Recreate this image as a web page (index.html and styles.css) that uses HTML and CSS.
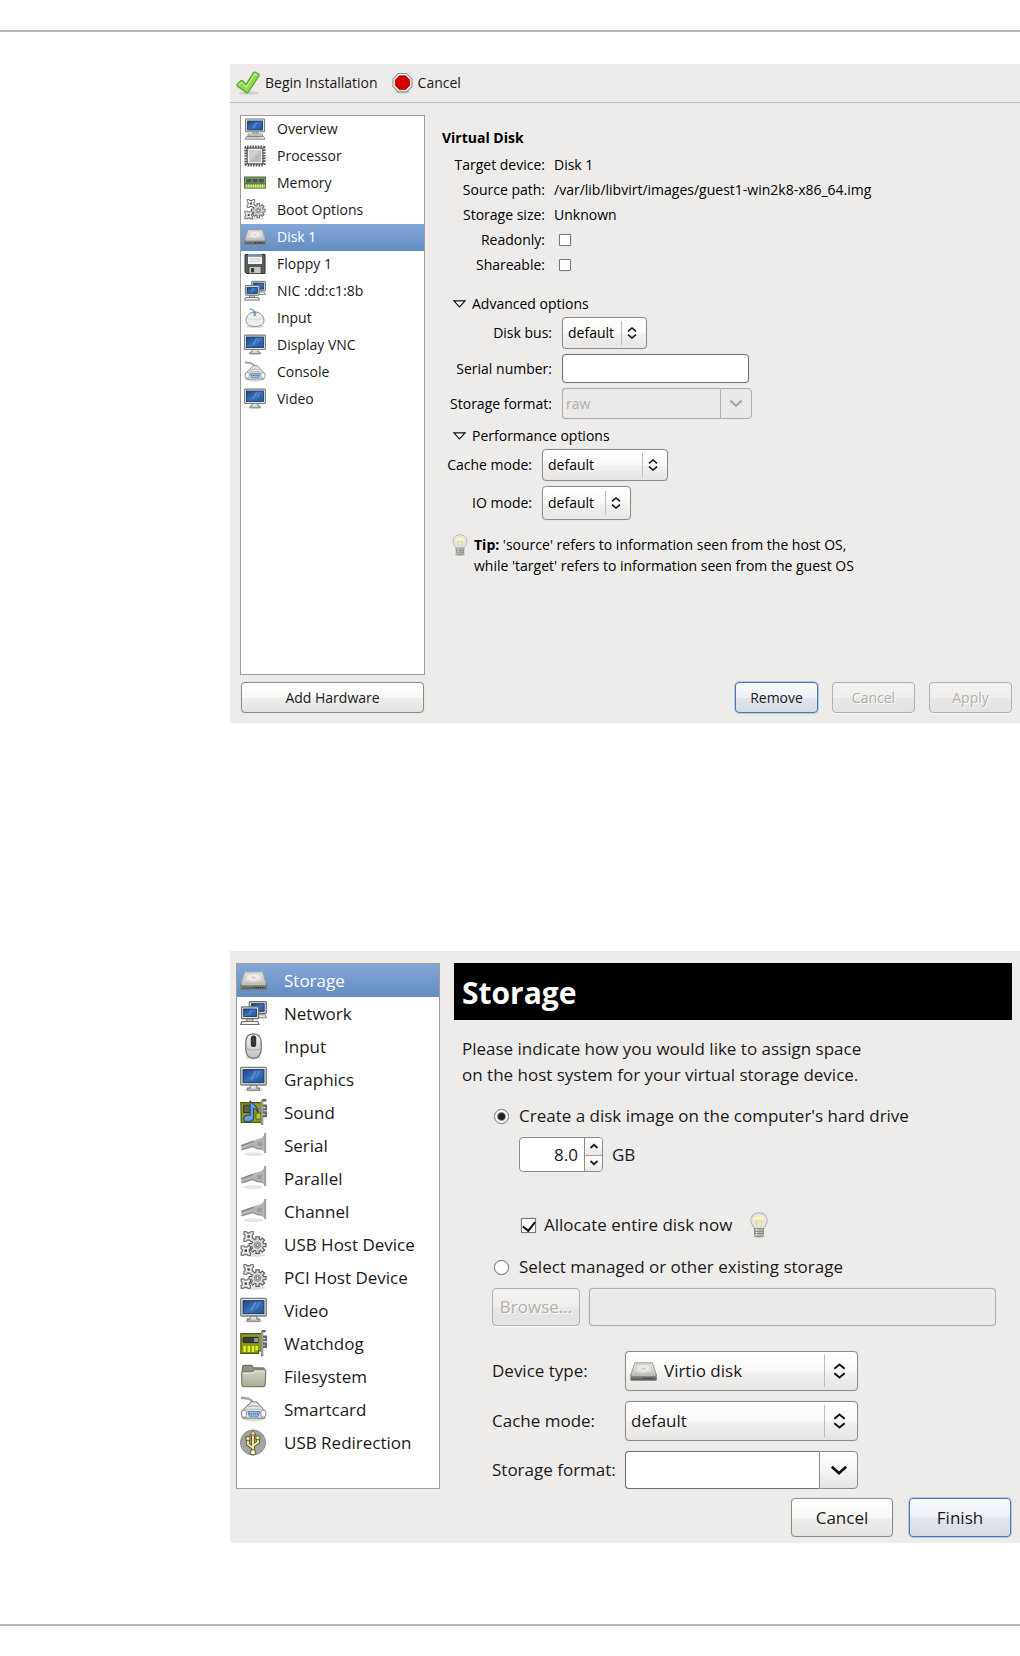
FILE: index.html
```html
<!DOCTYPE html>
<html lang="en">
<head>
<meta charset="utf-8">
<title>Virtual machine storage</title>
<link rel="stylesheet" href="styles.css">
</head>
<body>
<svg class="sprite" width="0" height="0" aria-hidden="true">
  <defs>
    <linearGradient id="g-screen" x1="0" y1="0" x2="1" y2="1"><stop offset="0" stop-color="#1c4587"/><stop offset=".5" stop-color="#3a70ba"/><stop offset="1" stop-color="#245299"/></linearGradient>
    <linearGradient id="g-metal" x1="0" y1="0" x2="0" y2="1"><stop offset="0" stop-color="#f6f6f5"/><stop offset="1" stop-color="#bfc1bd"/></linearGradient>
    <linearGradient id="g-dark" x1="0" y1="0" x2="0" y2="1"><stop offset="0" stop-color="#a5a7a3"/><stop offset="1" stop-color="#4e504c"/></linearGradient>
    <linearGradient id="g-folder" x1="0" y1="0" x2="0" y2="1"><stop offset="0" stop-color="#d2d5c4"/><stop offset="1" stop-color="#a9ad98"/></linearGradient>

    <symbol id="monitor" viewBox="0 0 22 22">
      <ellipse cx="11" cy="19.5" rx="8" ry="1.5" fill="#000" opacity=".1"/>
      <path d="M8.5 15.5h5l.5 2.500h2v1.800H6V18h2z" fill="url(#g-metal)" stroke="#777974" stroke-width=".9"/>
      <rect x=".6" y="1.100" width="20.800" height="14.400" rx=".8" fill="#e4e5e1" stroke="#7c7e79" stroke-width="1.100"/>
      <rect x="2.500" y="3" width="17" height="10.600" fill="url(#g-screen)" stroke="#17366b" stroke-width=".8"/>
      <path d="M8 11 12 4h1.800l-3.500 7zM12.500 9.500 15.200 4h1.200l-2.700 5.500z" fill="#7fa5dc" opacity=".5"/>
    </symbol>
    <symbol id="computer" viewBox="0 0 22 22">
      <path d="M9 13.500h5v3H9z" fill="#c4c6c2" stroke="#777974" stroke-width=".8"/>
      <rect x="1.600" y="1" width="19" height="12.800" rx=".8" fill="#e4e5e1" stroke="#7c7e79" stroke-width="1.100"/>
      <rect x="3.600" y="3" width="15" height="9" fill="url(#g-screen)" stroke="#17366b" stroke-width=".8"/>
      <path d="M8.500 10 12 4h1.500l-3 6z" fill="#7fa5dc" opacity=".5"/>
      <path d="M4 16h14.500v2H4z" fill="#e4e5e1" stroke="#8a8c87" stroke-width=".8"/>
      <path d="M2.500 18.500h17l1.500 2.700H1z" fill="#f3f3f1" stroke="#7c7e79" stroke-width=".9"/>
      <path d="M3.500 19.800h13" stroke="#8a8c87" stroke-width=".8" stroke-dasharray="1.400 .6"/>
    </symbol>
    <symbol id="network" viewBox="0 0 22 22">
      <path d="M12 12h8.500l1 2.500H12z" fill="#f1f1ef" stroke="#777974" stroke-width=".8"/>
      <rect x="7.600" y="1.300" width="13.800" height="9.600" rx=".6" fill="#e4e5e1" stroke="#6c6e69"/>
      <rect x="9.300" y="3" width="10.400" height="6.200" fill="url(#g-screen)" stroke="#17366b" stroke-width=".7"/>
      <path d="M5.500 15h5v3h-5z" fill="#c4c6c2" stroke="#6c6e69" stroke-width=".8"/>
      <rect x="1.300" y="5.600" width="13.800" height="9.600" rx=".6" fill="#e4e5e1" stroke="#6c6e69"/>
      <rect x="3" y="7.300" width="10.400" height="6.200" fill="url(#g-screen)" stroke="#17366b" stroke-width=".7"/>
      <path d="m7 12 2-4h1l-2 4z" fill="#7fa5dc" opacity=".6"/>
      <path d="M1.500 17.500h13l1 2.500H.6z" fill="#f1f1ef" stroke="#6c6e69" stroke-width=".9"/>
    </symbol>
    <symbol id="cpu" viewBox="0 0 22 22">
      <rect x="2" y="2" width="18" height="18" rx="1" fill="none" stroke="#50524e" stroke-width="3.200" stroke-dasharray="1.600 1.100"/>
      <rect x="3.200" y="3.200" width="15.600" height="15.600" rx="1" fill="#f5f5f4" stroke="#5d5f5a" stroke-width="1.200"/>
      <rect x="5" y="5" width="12" height="12" fill="#cfd0ce"/>
      <path d="M5 17 17 5v12z" fill="#bcbeba"/>
    </symbol>
    <symbol id="memory" viewBox="0 0 22 22">
      <rect x=".5" y="5" width="21" height="7" fill="#75a873" stroke="#46703f"/>
      <path d="M2.200 6.800h5.300v3.600H2.200zM8.400 6.800h5.300v3.600H8.400zM14.600 6.800h5.300v3.600h-5.300z" fill="#4f514e"/>
      <path d="M.5 12h21v4.200H.5z" fill="#78a63c" stroke="#456d1f" stroke-width=".8"/>
      <path d="M1.800 14.100h19" stroke="#f6ef8e" stroke-width="3" stroke-dasharray="1.500 .8"/>
    </symbol>
    <symbol id="gears" viewBox="0 0 22 22">
      <ellipse cx="12" cy="19.500" rx="9" ry="1.500" fill="#000" opacity=".12"/>
      <g fill="#555753">
        <g id="gear-big" transform="translate(14.300 11.500)">
          <circle r="5.300"/>
          <path id="teeth" d="M-1.800-7.300h3.600v14.600h-3.600zM-7.300-1.800h14.600v3.600H-7.300z"/>
          <path d="M-1.800-7.300h3.600v14.600h-3.600zM-7.300-1.800h14.600v3.600H-7.300z" transform="rotate(45)"/>
        </g>
        <path d="M2.800.3h3v.8h2.400V.3h3v3h-.8v2.400h.8v3h-3v-.8H5.800v.8h-3v-3h.8V3.300h-.8z"/>
        <path d="M.5 11.800h3v.8h2.400v-.8h3v3h-.8v2.400h.8v3h-3v-.8H3.500v.8h-3v-3h.8v-2.400H.5z"/>
      </g>
      <g fill="#d6d8d4">
        <g transform="translate(14.300 11.500)">
          <circle r="4.500"/>
          <path d="M-.9-6.400H.9V6.400H-.9zM-6.400-.9H6.400V.9H-6.400z"/>
          <path d="M-.9-6.400H.9V6.400H-.9zM-6.400-.9H6.400V.9H-6.400z" transform="rotate(45)"/>
        </g>
      </g>
      <g fill="#f1f1ef">
        <path d="M3.600 1.100h1.800v.9h3.200v-.9h1.800v1.800h-.9v3.200h.9v1.800H8.600V7H5.400v.9H3.600V6.100h.9V2.900h-.9z"/>
        <path d="M1.300 12.600h1.800v.9h3.200v-.9h1.800v1.800h-.9v3.200h.9v1.800H6.300v-.9H3.100v.9H1.300v-1.800h.9v-3.200h-.9z"/>
      </g>
      <circle cx="14.300" cy="11.500" r="2.600" fill="#bdbfbb" stroke="#81837e" stroke-width=".7"/>
      <circle cx="14.300" cy="11.500" r="1.200" fill="#fff" stroke="#555753" stroke-width=".7"/>
      <rect x="6" y="3.500" width="2" height="2" fill="#4a4c48"/><rect x="3.700" y="15" width="2" height="2" fill="#4a4c48"/>
    </symbol>
    <symbol id="disk" viewBox="0 0 22 22">
      <path d="M4 4h14.300l3 9.500H.8z" fill="url(#g-metal)" stroke="#a2a4a0" stroke-width=".9"/>
      <path d="M5.500 5h11.300l1.700 6.500q-7.500 2-15 0z" fill="#dddedc" stroke="#c1c2bf" stroke-width=".6"/>
      <ellipse cx="11" cy="8.300" rx="5" ry="2.600" fill="#ebebea"/>
      <ellipse cx="11" cy="8.600" rx="1.800" ry=".7" fill="#c9cac7"/>
      <path d="M.7 13.500h20.700v4.600H.7z" fill="url(#g-dark)" stroke="#777975" stroke-width=".8"/>
      <path d="M1.200 13.800h19.600" stroke="#deded9"/>
      <path d="M11 16.600h8.500" stroke="#333" stroke-width="1.200" stroke-dasharray="1 .7"/>
    </symbol>
    <symbol id="floppy" viewBox="0 0 22 22">
      <path d="M1 1.500h20v19H2.500L1 19z" fill="#5b5d5a" stroke="#2f312e"/>
      <path d="M4 1.500h14v9.500H4z" fill="#f4f4f3"/>
      <path d="M4 1.500h14v2.300H4z" fill="#5f8fc7"/>
      <path d="M5.500 6h11M5.500 8.300h11" stroke="#c2c4c0" stroke-width=".9"/>
      <path d="M5 13.500h12v7H5z" fill="#c6c8c4" stroke="#3c3e3b" stroke-width=".7"/>
      <path d="M7 15h3.200v4.300H7z" fill="#3c3e3b"/>
    </symbol>
    <symbol id="mouse" viewBox="0 0 22 22">
      <ellipse cx="11" cy="19.500" rx="9" ry="1.700" fill="#000" opacity=".12"/>
      <path d="M5 1.500c1 2 5-.5 5.500 4" fill="none" stroke="#888a85" stroke-width="1.100"/>
      <path d="M11 5c6 0 9 4.500 9 8.500 0 4-3.500 6-9 6s-9-2-9-6C2 9.500 5 5 11 5z" fill="#eeeeec" stroke="#8e908b"/>
      <path d="M3 10.500c4 3 12 3 16 0" fill="none" stroke="#d8dad6"/>
      <path d="M9.500 5h2.600l-.8 4h-1z" fill="#7dabe0" stroke="#5685bd" stroke-width=".6"/>
    </symbol>
    <symbol id="mouse-dark" viewBox="0 0 22 22">
      <ellipse cx="11" cy="20" rx="6.500" ry="1.400" fill="#000" opacity=".15"/>
      <path d="M11 .8c4.500 0 6 2 6.200 6.200.3 6 .8 13.500-6.200 13.500S4.500 13 4.800 7C5 2.800 6.500.8 11 .8z" fill="url(#g-metal)" stroke="#6d6f6a"/>
      <path d="M5 12c1 2.500 11 2.500 12 0" fill="none" stroke="#a9aba7" stroke-width=".8"/>
      <rect x="8.800" y="2" width="4.400" height="9.500" rx="2.200" fill="#2e3032"/>
      <path d="M11 4.500v2.500" stroke="#8a4a44" stroke-width="1.200"/>
    </symbol>
    <symbol id="port" viewBox="0 0 22 22">
      <ellipse cx="11" cy="18.500" rx="9" ry="2.200" fill="#000" opacity=".15"/>
      <path d="M.8 1.500c5 .3 8.500.5 10.500 4.500" fill="none" stroke="#a5a7a3" stroke-width="2"/>
      <path d="m7.500 6.500 1.500-1.800h4.500L15 6.500l5.500 6-.5 5.500H2L1.200 12.500z" fill="#e6e7e4" stroke="#888a85" stroke-width=".9"/>
      <path d="M6.500 9c2-1.300 7-1.300 9 0M5 10.800h12" fill="none" stroke="#b1b3af"/>
      <rect x="1.300" y="11.700" width="4" height="5.500" rx="1.500" fill="#fafafa" stroke="#888a85" stroke-width=".8"/>
      <rect x="17" y="11.700" width="4" height="5.500" rx="1.500" fill="#fafafa" stroke="#888a85" stroke-width=".8"/>
      <path d="M6.500 12.600h9.500l-1 3.900H7.500z" fill="#9dbce6" stroke="#5b86bf" stroke-width=".8"/>
      <path d="M7.500 14.500h7.500" stroke="#3465a4" stroke-dasharray=".9 .7"/>
    </symbol>
    <symbol id="sound" viewBox="0 0 22 22">
      <path d="M.7 3h17.500v16H1z" fill="#8c9c19" stroke="#4e5a0c"/>
      <rect x="3" y="5" width="6" height="6" fill="#5d5f5a" stroke="#33352f" stroke-width=".8"/>
      <path d="M13 11.500h4v5h-4z" fill="#b8c441" stroke="#4e5a0c" stroke-width=".7"/>
      <path d="M18 1h3.500M18 1v20M18 5.500h3.500v3H18M18 11h3v3h-3" fill="none" stroke="#666863" stroke-width="1.900"/>
      <path d="M18 1.500v19" stroke="#dcdeda" stroke-width=".7"/>
      <path d="M8.300 1.300c.7 2.700 6.900 3.700 6.400 9.700-1-2.500-2.200-3.300-3.700-3.300v7.800c0 3.300-8 4.300-8 .7 0-2.700 3.300-3.500 5.300-2.900z" fill="#6f9cd6" stroke="#204a87" stroke-width=".9"/>
    </symbol>
    <symbol id="card" viewBox="0 0 22 22">
      <path d="M.7 3h17v14H15v2H.7z" fill="#8c9c19" stroke="#4e5a0c"/>
      <rect x="2.500" y="6" width="12.500" height="4.300" rx=".6" fill="#3b3d3a" stroke="#222" stroke-width=".7"/>
      <path d="M11.500 6.500H15v3.300h-3.500z" fill="#6f9cd6"/>
      <path d="M3.800 18v-5M7.200 18v-5M10.600 18v-5M13.600 16.500V13" stroke="#e9f02b" stroke-width="1.900"/>
      <path d="M18 .8h3M18 .8v20.500M18 5.500h3.500v2.700H18M18 11h3v2.700h-3" fill="none" stroke="#666863" stroke-width="1.900"/>
      <path d="M18 1.500v19" stroke="#dcdeda" stroke-width=".7"/>
    </symbol>
    <symbol id="plug" viewBox="0 0 22 22">
      <ellipse cx="11" cy="18" rx="8" ry="1.600" fill="#000" opacity=".1"/>
      <path d="M1 10.800 9.500 7.500 13 6.200c4-.5 6.500-2 7.300-5.500h.7v16.500h-.7c-1-2.500-3-3-6-3.200L10.500 12.200 1.500 15z" fill="#b4b6b1"/>
      <path d="m1 11.300 10-3.800" stroke="#888a85" stroke-width="1.300"/>
      <path d="M1.200 14.300 10.500 11.700 14 13.500l4 .2" fill="none" stroke="#8e908b"/>
      <path d="M20.500.8v16.400" stroke="#9da09a" stroke-width="1.600"/>
      <path d="m14 8.500 4-.8v4l-4-.4z" fill="#999b97"/>
    </symbol>
    <symbol id="folder" viewBox="0 0 22 22">
      <path d="M2 3.500Q2 2 3.500 2h6L11 4h7.500Q20 4 20 5.500V10H2z" fill="#8f937f" stroke="#6c705e"/>
      <path d="M1.200 8.200Q1.200 7 2.500 7H10l1.500-1.500H20q1 0 1 1.300l-.5 11q-.1 1.500-1.500 1.500H3q-1.300 0-1.400-1.500z" fill="url(#g-folder)" stroke="#787c69"/>
      <path d="M2.500 8.200h8L12 6.700h7.700" fill="none" stroke="#e7e9dd" stroke-width=".8"/>
    </symbol>
    <symbol id="usb" viewBox="0 0 22 22">
      <circle cx="10.600" cy="11" r="10.200" fill="#a3a5a2" stroke="#868883" stroke-width=".8"/>
      <g stroke="#4a4330" stroke-width="2.900" fill="none"><path d="M10.600 19V4M10.600 15.500 6.500 12.500V8M10.600 13.500l4-2.500V7"/></g>
      <g stroke="#f6e58a" stroke-width="1.700" fill="none"><path d="M10.600 19V4M10.600 15.500 6.500 12.500V8M10.600 13.500l4-2.500V7"/></g>
      <path d="m10.600 1.200 2.400 3.600H8.200z" fill="#f6e58a" stroke="#4a4330" stroke-width=".6"/>
      <rect x="4.900" y="6.200" width="3.200" height="3" fill="#f6e58a" stroke="#4a4330" stroke-width=".6"/>
      <rect x="13" y="5.700" width="3.200" height="3" fill="#f6e58a" stroke="#4a4330" stroke-width=".6"/>
      <circle cx="10.600" cy="19" r="2.200" fill="#f5f0d8" stroke="#4a4330" stroke-width=".7"/>
    </symbol>
    <symbol id="bulb" viewBox="0 0 16 22">
      <ellipse cx="8" cy="20.500" rx="5" ry="1.200" fill="#000" opacity=".25"/>
      <path d="M8 .7c4.300 0 7 2.900 7 6.500 0 3.300-2.800 4.300-3 7.300H4c-.2-3-3-4-3-7.300C1 3.600 3.700.7 8 .7z" fill="#e6e7e3" stroke="#b4b7b0" stroke-width=".9"/>
      <ellipse cx="8" cy="6" rx="4" ry="2.600" fill="#fbf7b5" opacity=".9"/>
      <path d="m6.500 14-1-7 1.700 1L8 7l.8 1 1.700-1-1 7" fill="none" stroke="#d2cfa0" stroke-width=".7"/>
      <path d="M4.200 14h7.600v4.800L10.300 20.500H5.700L4.200 18.800z" fill="#babdb6" stroke="#8b8e88" stroke-width=".8"/>
      <path d="M6 14.500v5" stroke="#f2f2f0" stroke-width="1.200"/>
      <path d="M4.300 16.300h7.400M4.300 18.200h7.400" stroke="#7c7f79" stroke-width=".8"/>
    </symbol>
    <symbol id="check" viewBox="0 0 24 24">
      <ellipse cx="13" cy="22" rx="10" ry="1.700" fill="#000" opacity=".12"/>
      <path d="m1.300 13.200 3.400-3.400q1-.8 2 .2l3.300 3.500L17.300 1.900q.8-1.200 2-.7l3 1.500q1.300.8.600 2.200L12.500 21q-1.200 1.500-2.600.2l-8.400-6q-1.100-1-.2-2z" fill="#8fdc4a" stroke="#5ba32c" stroke-width="1.200" stroke-linejoin="round"/>
      <path d="m3 13.700 2.500-2.300 4.800 4.800L19 2.800l2 1" fill="none" stroke="#c9f39f" stroke-width="1.100"/>
    </symbol>
    <symbol id="stop" viewBox="0 0 22 22">
      <ellipse cx="11" cy="20.500" rx="8" ry="1.300" fill="#000" opacity=".18"/>
      <path d="M6.700 1h8.600L21 6.700v8L15.300 20.300H6.700L1 14.700v-8z" fill="#f0f0ee" stroke="#8f918d" stroke-width="1.100"/>
      <path d="M7.800 3.500h6.400l4.300 4.300v5.800l-4.300 4.300H7.800l-4.300-4.300V7.800z" fill="#d40000" stroke="#990000" stroke-width=".8"/>
    </symbol>
    <symbol id="updown" viewBox="0 0 12 14">
      <path d="m1.200 5 4.800-4 4.800 4M1.200 9 6 13l4.800-4" fill="none" stroke="#111" stroke-width="1.800"/>
    </symbol>
    <symbol id="down" viewBox="0 0 16 10">
      <path d="m1.500 1.500 6.500 6 6.500-6" fill="none" stroke="currentColor" stroke-width="2.500"/>
    </symbol>
    <symbol id="up-small" viewBox="0 0 10 6"><path d="m1.500 5L5 1.800 8.500 5" fill="none" stroke="#222" stroke-width="1.900"/></symbol>
    <symbol id="down-small" viewBox="0 0 10 6"><path d="m1.500 1L5 4.200 8.500 1" fill="none" stroke="#222" stroke-width="1.900"/></symbol>
    <symbol id="expander" viewBox="0 0 13 8"><path d="M.9.8h11.200L6.500 6.800z" fill="#fff" stroke="#111" stroke-width="1.200"/></symbol>
  </defs>
</svg>

<main class="page">
  <section class="window details-window" aria-label="Virtual machine details">
    <div class="toolbar">
      <button class="tool" type="button"><svg class="icon-tool"><use href="#check"/></svg>Begin Installation</button>
      <button class="tool" type="button"><svg class="icon-stop"><use href="#stop"/></svg>Cancel</button>
    </div>
    <div class="details-body">
      <ul class="list list-small">
        <li><svg class="icon"><use href="#computer"/></svg>Overview</li>
        <li><svg class="icon"><use href="#cpu"/></svg>Processor</li>
        <li><svg class="icon"><use href="#memory"/></svg>Memory</li>
        <li><svg class="icon"><use href="#gears"/></svg>Boot Options</li>
        <li class="selected"><svg class="icon"><use href="#disk"/></svg>Disk 1</li>
        <li><svg class="icon"><use href="#floppy"/></svg>Floppy 1</li>
        <li><svg class="icon"><use href="#network"/></svg>NIC :dd:c1:8b</li>
        <li><svg class="icon"><use href="#mouse"/></svg>Input</li>
        <li><svg class="icon"><use href="#monitor"/></svg>Display VNC</li>
        <li><svg class="icon"><use href="#port"/></svg>Console</li>
        <li><svg class="icon"><use href="#monitor"/></svg>Video</li>
      </ul>
      <div class="properties">
        <h2 class="properties-title">Virtual Disk</h2>
        <div class="facts">
          <span class="label">Target device:</span><span>Disk 1</span>
          <span class="label">Source path:</span><span>/var/lib/libvirt/images/guest1-win2k8-x86_64.img</span>
          <span class="label">Storage size:</span><span>Unknown</span>
          <label class="label" for="readonly">Readonly:</label><input class="tick tick-small" type="checkbox" id="readonly">
          <label class="label" for="shareable">Shareable:</label><input class="tick tick-small" type="checkbox" id="shareable">
        </div>
        <details class="advanced" open>
          <summary><svg class="expander"><use href="#expander"/></svg>Advanced options</summary>
          <div class="options options-advanced">
            <label class="label" for="bus">Disk bus:</label>
            <div class="select select-bus"><select id="bus"><option>default</option></select><svg class="arrows"><use href="#updown"/></svg></div>
            <label class="label" for="serial">Serial number:</label>
            <input class="entry entry-serial" type="text" id="serial">
            <label class="label" for="format1">Storage format:</label>
            <div class="combo combo-small"><input class="entry" type="text" id="format1" value="raw" disabled><button type="button" disabled aria-label="Choose format"><svg class="chevron"><use href="#down"/></svg></button></div>
          </div>
        </details>
        <details class="performance" open>
          <summary><svg class="expander"><use href="#expander"/></svg>Performance options</summary>
          <div class="options options-performance">
            <label class="label" for="cache1">Cache mode:</label>
            <div class="select select-cache"><select id="cache1"><option>default</option></select><svg class="arrows"><use href="#updown"/></svg></div>
            <label class="label" for="io">IO mode:</label>
            <div class="select select-io"><select id="io"><option>default</option></select><svg class="arrows"><use href="#updown"/></svg></div>
          </div>
        </details>
        <div class="tip">
          <svg class="bulb"><use href="#bulb"/></svg>
          <p><b>Tip:</b> 'source' refers to information seen from the host OS,<br>while 'target' refers to information seen from the guest OS</p>
        </div>
      </div>
      <button class="button add" type="button">Add Hardware</button>
      <div class="actions">
        <button class="button primary" type="button">Remove</button>
        <button class="button" type="button" disabled>Cancel</button>
        <button class="button" type="button" disabled>Apply</button>
      </div>
    </div>
  </section>

  <section class="window add-window" aria-label="Add new virtual hardware">
    <ul class="list list-large">
      <li class="selected"><svg class="icon"><use href="#disk"/></svg>Storage</li>
      <li><svg class="icon"><use href="#network"/></svg>Network</li>
      <li><svg class="icon"><use href="#mouse-dark"/></svg>Input</li>
      <li><svg class="icon"><use href="#monitor"/></svg>Graphics</li>
      <li><svg class="icon"><use href="#sound"/></svg>Sound</li>
      <li><svg class="icon"><use href="#plug"/></svg>Serial</li>
      <li><svg class="icon"><use href="#plug"/></svg>Parallel</li>
      <li><svg class="icon"><use href="#plug"/></svg>Channel</li>
      <li><svg class="icon"><use href="#gears"/></svg>USB Host Device</li>
      <li><svg class="icon"><use href="#gears"/></svg>PCI Host Device</li>
      <li><svg class="icon"><use href="#monitor"/></svg>Video</li>
      <li><svg class="icon"><use href="#card"/></svg>Watchdog</li>
      <li><svg class="icon"><use href="#folder"/></svg>Filesystem</li>
      <li><svg class="icon"><use href="#port"/></svg>Smartcard</li>
      <li><svg class="icon"><use href="#usb"/></svg>USB Redirection</li>
    </ul>
    <form class="storage">
      <h1 class="banner">Storage</h1>
      <p class="intro">Please indicate how you would like to assign space<br>on the host system for your virtual storage device.</p>
      <label class="choice create"><input class="dot" type="radio" name="source" checked>Create a disk image on the computer's hard drive</label>
      <div class="size">
        <div class="spin">
          <input type="number" id="size" value="8.0" step="0.1" aria-label="Size in gigabytes">
          <div class="spin-buttons">
            <button type="button" aria-label="Increase"><svg><use href="#up-small"/></svg></button>
            <button type="button" aria-label="Decrease"><svg><use href="#down-small"/></svg></button>
          </div>
        </div>
        <label for="size">GB</label>
      </div>
      <div class="allocate">
        <label class="choice"><input class="tick" type="checkbox" checked>Allocate entire disk now</label>
        <svg class="bulb bulb-large"><use href="#bulb"/></svg>
      </div>
      <label class="choice managed"><input class="dot" type="radio" name="source">Select managed or other existing storage</label>
      <div class="browse">
        <button class="button" type="button" disabled>Browse...</button>
        <input class="entry" type="text" aria-label="Storage path" disabled>
      </div>
      <div class="device">
        <label for="type">Device type:</label>
        <div class="select select-type"><select id="type"><option>Virtio disk</option></select><svg class="select-icon"><use href="#disk"/></svg><svg class="arrows"><use href="#updown"/></svg></div>
        <label for="cache2">Cache mode:</label>
        <div class="select"><select id="cache2"><option>default</option></select><svg class="arrows"><use href="#updown"/></svg></div>
        <label for="format2">Storage format:</label>
        <div class="combo"><input class="entry" type="text" id="format2"><button type="button" aria-label="Choose format"><svg class="chevron"><use href="#down"/></svg></button></div>
      </div>
      <div class="actions">
        <button class="button" type="button">Cancel</button>
        <button class="button primary" type="button">Finish</button>
      </div>
    </form>
  </section>
</main>
</body>
</html>
```
FILE: styles.css
```css
* { box-sizing: border-box; }

body {
  margin: 0;
  padding: 30px 0;
  background: #fff;
  color: #1a1a1a;
  font: 14px/20px "Open Sans", "Noto Sans", sans-serif;
}

h1, h2, p, ul { margin: 0; padding: 0; }
button, input, select { font: inherit; color: inherit; margin: 0; }
svg { display: block; flex: none; }
.sprite { position: absolute; }

.page {
  display: flex;
  flex-direction: column;
  gap: 228px;
  padding: 32px 0 81px 230px;
  border: solid #b9b9b9;
  border-width: 2px 0;
}

.window { background: #edecea; }

/* Device lists */
.list {
  list-style: none;
  background: #fff;
  border: 1px solid #a09d99;
}
.list li { display: flex; align-items: center; padding-left: 3px; white-space: nowrap; }
.list .selected { background: linear-gradient(#83a7d9, #628dc2); color: #fff; }
.list-small { display: grid; grid-template-rows: repeat(11, 1fr); align-self: stretch; padding-bottom: 262px; }
.list-small li { gap: 11px; }
.list-small .icon { width: 22px; height: 22px; }
.list-large li { height: 33px; gap: 17px; }
.list-large .icon { width: 27px; height: 27px; }

/* Buttons */
.button {
  height: 31px;
  padding: 0;
  border: 1px solid #8f8c88;
  border-radius: 4px;
  background: linear-gradient(#fff, #f8f8f7 50%, #efeeed 52%, #e4e3e1);
  box-shadow: 0 0 1px #b5b3b0;
  text-align: center;
}
.button.primary {
  border-color: #4d76a8;
  background: linear-gradient(#fafbfe, #eceff6 50%, #e2e6ee 52%, #d5dae3);
  box-shadow: 0 0 0 1px #b4c8e2;
}
.button:disabled {
  border-color: #b3b1ad;
  background: linear-gradient(#f4f3f2, #efeeed 50%, #e8e7e5 52%, #e4e3e1);
  box-shadow: 0 1px 0 #fafafa;
  color: #b0aeaa;
  text-shadow: 1px 1px 0 #fff;
}
.actions { display: flex; justify-content: flex-end; }

/* Form controls */
.entry {
  width: 100%;
  height: 100%;
  padding: 0 3px;
  border: 1px solid #73706c;
  border-radius: 4px;
  background: #fff;
  box-shadow: 0 0 1px #b5b3b0;
}
.entry:disabled { background: #ebeae8; border-color: #b0aeaa; color: #b0aeaa; }

.select { display: grid; grid-template-columns: 1fr 26px; align-items: center; }
.select select {
  grid-area: 1 / 1 / 2 / 3;
  width: 100%;
  height: 100%;
  padding: 0 5px;
  appearance: none;
  border: 1px solid #8f8c88;
  border-radius: 4px;
  background: linear-gradient(#fff, #f8f8f7 50%, #f2f1f0 55%, #e6e5e3);
  box-shadow: 0 0 1px #b5b3b0;
}
.arrows {
  grid-area: 1 / 2;
  width: 25px;
  height: 24px;
  padding: 5px 9px 5px 5px;
  border-left: 1px solid #c0beba;
  pointer-events: none;
}

.combo { display: grid; grid-template-columns: 1fr 32px; }
.combo .entry { border-radius: 4px 0 0 4px; border-right: 0; }
.combo button {
  display: grid;
  place-items: center;
  padding: 0;
  border: 1px solid #8f8c88;
  border-radius: 0 4px 4px 0;
  background: linear-gradient(#fff, #f6f5f4 50%, #e6e5e3);
  color: #111;
}
.combo button:disabled { border-color: #b0aeaa; background: #e9e8e6; color: #a5a39f; }
.chevron { width: 14px; height: 9px; }

.tick, .dot {
  flex: none;
  width: 15px;
  height: 15px;
  appearance: none;
  border: 1px solid #7b7975;
  background: #fff;
  box-shadow: 0 0 1px #aaa;
}
.tick { display: grid; place-items: center; }
.tick-small { width: 12px; height: 12px; border-radius: 1px; }
.tick:checked::after {
  content: "";
  width: 6px;
  height: 10px;
  margin-bottom: 2px;
  border: solid #111;
  border-width: 0 2px 2px 0;
  transform: rotate(38deg);
}
.dot { border-radius: 50%; }
.dot:checked { background: radial-gradient(circle, #222 0 3px, #fff 5px); }

/* Machine details window */
.toolbar {
  display: flex;
  align-items: center;
  gap: 14px;
  height: 39px;
  padding: 0 6px 1px;
  border-bottom: 1px solid #c0bebb;
}
.tool { display: flex; align-items: center; gap: 5px; padding: 0; border: 0; background: none; }
.icon-tool { width: 24px; height: 24px; }
.icon-stop { width: 21px; height: 22px; }

.details-body {
  display: grid;
  grid-template-columns: 185px 1fr;
  grid-template-rows: minmax(560px, auto) auto;
  gap: 7px 17px;
  padding: 12px 8px 10px 10px;
}
.properties { padding-top: 13px; color: #000; }
.properties-title { margin-bottom: 4px; font-size: 14px; line-height: 20px; }
.label { text-align: right; white-space: nowrap; }
.facts {
  display: grid;
  grid-template-columns: 103px 1fr;
  grid-auto-rows: 25px;
  column-gap: 9px;
  align-items: center;
}
.facts .tick { margin-left: 5px; }

summary { display: flex; align-items: center; gap: 6px; padding-left: 11px; list-style: none; }
.expander { width: 13px; height: 8px; }
.advanced { margin-top: 17px; }
.performance { margin-top: 7px; }
.options { display: grid; align-items: center; gap: 5px 10px; margin-top: 3px; }
.options .select { height: 32px; }
.options .select-io { width: 89px; height: 34px; }
.options-advanced { grid-template-columns: 110px 1fr; }
.options-performance { grid-template-columns: 90px 1fr; }
.select-bus { width: 85px; }
.select-cache { width: 126px; }
.entry-serial { width: 187px; height: 29px; }
.combo-small { width: 190px; height: 31px; }

.tip { display: flex; gap: 6px; margin-top: 14px; padding-left: 10px; }
.tip p { line-height: 21px; }
.bulb { width: 16px; height: 22px; }

.add { margin: 0 1px; }
.details-body .actions { gap: 14px; }
.details-body .actions .button { width: 83px; }

/* Add hardware window */
.add-window {
  display: grid;
  grid-template-columns: 204px 1fr;
  gap: 14px;
  padding: 12px 8px 6px 6px;
  font-size: 17px;
  line-height: 26px;
}
.list-large { margin-bottom: 48px; }
.banner {
  height: 57px;
  padding-left: 8px;
  background: #000;
  color: #fff;
  font-size: 30px;
  line-height: 60px;
}
.intro { margin-top: 16px; padding-left: 8px; }
.choice { display: flex; align-items: center; gap: 10px; }
.create { margin-top: 15px; padding-left: 40px; }
.size { display: flex; align-items: center; gap: 9px; margin-top: 8px; padding-left: 65px; }
.spin {
  display: grid;
  grid-template-columns: 1fr 17px;
  width: 84px;
  height: 35px;
  overflow: hidden;
  border: 1px solid #8f8c88;
  border-radius: 4px;
  background: #fff;
}
.spin input {
  width: 100%;
  padding: 0 6px;
  appearance: textfield;
  border: 0;
  border-right: 1px solid #8f8c88;
  background: none;
  text-align: right;
}
.spin input::-webkit-inner-spin-button { display: none; }
.spin-buttons { display: grid; grid-template-rows: 1fr 1fr; }
.spin-buttons button {
  display: grid;
  place-items: center;
  padding: 0;
  border: 0;
  background: linear-gradient(#fff, #e9e8e6);
}
.spin-buttons button + button { border-top: 1px solid #a5a29e; }
.spin-buttons svg { width: 10px; height: 6px; }
.allocate { display: flex; align-items: center; gap: 17px; margin-top: 40px; padding-left: 67px; }
.allocate .choice { gap: 8px; }
.bulb-large { width: 20px; height: 26px; }
.managed { margin-top: 16px; padding-left: 40px; }
.browse {
  display: grid;
  grid-template-columns: 88px 1fr;
  gap: 9px;
  height: 38px;
  margin-top: 8px;
  padding: 0 16px 0 38px;
}
.browse .button { height: 100%; }
.device {
  display: grid;
  grid-template-columns: 133px 233px;
  grid-template-rows: 40px 40px 38px;
  row-gap: 10px;
  align-items: center;
  margin-top: 25px;
  padding-left: 38px;
}
.device .select { grid-template-columns: 1fr 34px; height: 100%; }
.device .select-type select { padding-left: 38px; }
.select-icon { grid-area: 1 / 1; width: 27px; height: 27px; margin-left: 5px; pointer-events: none; }
.device .arrows { width: 33px; height: 32px; padding: 7px 11px 7px 8px; }
.device .combo { grid-template-columns: 1fr 39px; height: 100%; }
.device .chevron { width: 18px; height: 11px; }
.storage .actions { gap: 16px; margin-top: 9px; padding-right: 1px; }
.storage .actions .button { width: 102px; height: 39px; }
```
